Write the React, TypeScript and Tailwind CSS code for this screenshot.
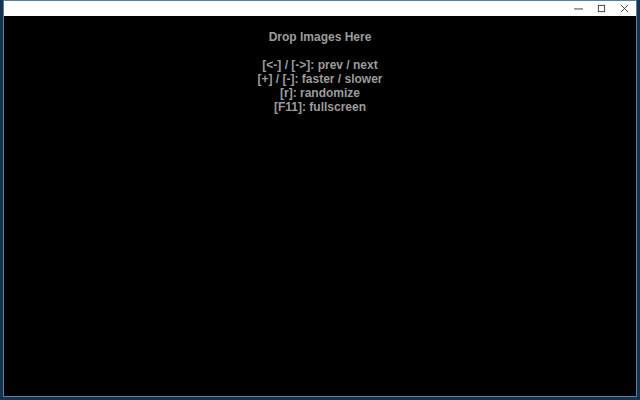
export default function App() {
  const lines = [
    'Drop Images Here',
    '',
    '[<-] / [->]: prev / next',
    '[+] / [-]: faster / slower',
    '[r]: randomize',
    '[F11]: fullscreen',
  ]

  return (
    <div className="flex h-[400px] w-[640px] bg-[#17324a] px-[3px] pb-[3px]">
      {/* Window */}
      <div className="flex flex-1 flex-col border border-[#4f84ad] bg-black">
        {/* Title bar */}
        <div className="flex h-[15px] items-center justify-end bg-white">
          <div className="flex h-full items-center text-[#333]">
            <span className="flex w-[23px] justify-center">
              <svg width="9" height="9" viewBox="0 0 10 10"><path d="M0 5.5h10" stroke="currentColor" strokeWidth="1" /></svg>
            </span>
            <span className="flex w-[23px] justify-center">
              <svg width="9" height="9" viewBox="0 0 10 10"><rect x="1.5" y="1.5" width="7" height="7" fill="none" stroke="currentColor" strokeWidth="1" /></svg>
            </span>
            <span className="flex w-[23px] justify-center">
              <svg width="9" height="9" viewBox="0 0 10 10"><path d="M1 1l8 8M9 1l-8 8" stroke="currentColor" strokeWidth="1" /></svg>
            </span>
          </div>
        </div>

        {/* Content */}
        <div className="flex flex-1 flex-col items-center pt-[14px] font-['Liberation_Sans',Arial,sans-serif] text-[12px] font-bold leading-[14px] text-[#9c9c9c]">
          {lines.map((l, i) => (
            <div key={i} className="h-[14px] whitespace-pre">{l}</div>
          ))}
        </div>
      </div>
    </div>
  )
}
